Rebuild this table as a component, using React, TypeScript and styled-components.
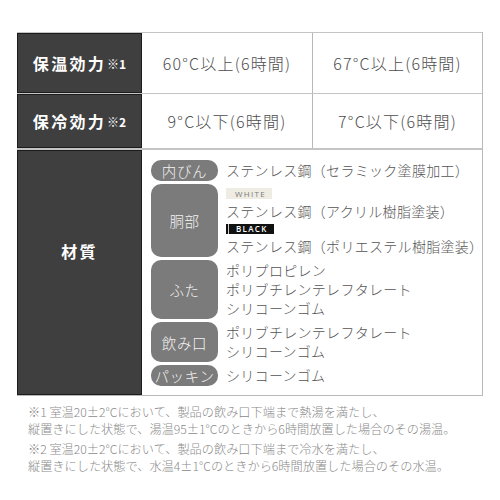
import React from "react";
import styled, { createGlobalStyle } from "styled-components";

const Global = createGlobalStyle`
  html, body { margin: 0; padding: 0; background: #fff; }
  body { font-family: "Noto Sans CJK JP", "Noto Sans", sans-serif; }
`;

const Page = styled.div`
  width: 500px;
  height: 500px;
  padding: 32px 17px 0 17px;
  box-sizing: border-box;
`;

const Table = styled.div`
  width: 466px;
  display: flex;
  flex-direction: column;
  border-right: 1px solid #b8b8b8;
  border-bottom: 1px solid #b8b8b8;
  box-sizing: border-box;
`;

const Row = styled.div<{ $h: number; $double?: boolean }>`
  display: grid;
  grid-template-columns: 125px 1fr 1fr;
  height: ${(p) => p.$h}px;
  border-top: ${(p) => (p.$double ? "2px" : "1px")} solid #c4c4c4;
  box-sizing: content-box;
`;

const MatRow = styled(Row)`
  grid-template-columns: 125px 1fr;
`;

const Head = styled.div<{ $shift?: number }>`
  background: #3f3f3f;
  border: 1px solid #1c1c1c;
  box-sizing: border-box;
  display: flex;
  align-items: center;
  justify-content: center;
  padding-bottom: ${(p) => p.$shift ?? 0}px;
  color: #fff;
  font-weight: 700;
  font-size: 16px;
  letter-spacing: 2.3px;
  white-space: nowrap;
`;

const Sup = styled.span`
  font-size: 12px;
  letter-spacing: 0;
  font-weight: 700;
  vertical-align: 5px;
  margin-left: 1px;
`;

const Value = styled.div<{ $divider?: boolean }>`
  display: flex;
  align-items: center;
  justify-content: center;
  border-left: ${(p) => (p.$divider ? "1px solid #b8b8b8" : "none")};
  color: #4d4d4d;
  font-size: 16px;
  font-weight: 300;
  letter-spacing: 1.2px;
  white-space: nowrap;
`;

const Materials = styled.div`
  display: flex;
  flex-direction: column;
  gap: 3px;
  padding: 10px 0 0 9px;
`;

const Group = styled.div`
  display: flex;
  align-items: stretch;
  gap: 8px;
`;

const Badge = styled.div`
  width: 67px;
  min-height: 21px;
  flex: none;
  background: #7b7b7b;
  border-radius: 10px;
  display: flex;
  align-items: center;
  justify-content: center;
  color: #f2f2f2;
  font-size: 14.5px;
  font-weight: 300;
  letter-spacing: 0.6px;
  white-space: nowrap;
`;

const Lines = styled.div`
  display: flex;
  flex-direction: column;
  justify-content: center;
  padding: 1px 0;
`;

const Line = styled.div`
  font-size: 14px;
  font-weight: 300;
  line-height: 19px;
  letter-spacing: 0.3px;
  color: #555;
  white-space: nowrap;
`;

const ColorTag = styled.div<{ $dark?: boolean }>`
  width: ${(p) => (p.$dark ? 48 : 46)}px;
  height: ${(p) => (p.$dark ? 10 : 11)}px;
  margin: 3px 0;
  padding-left: ${(p) => (p.$dark ? 8 : 9)}px;
  box-sizing: border-box;
  background: ${(p) => (p.$dark ? "#111" : "#efece4")};
  border-left: ${(p) => (p.$dark ? "2px solid #111" : "none")};
  box-shadow: ${(p) => (p.$dark ? "inset 1px 0 0 #cfcfcf" : "none")};
  color: ${(p) => (p.$dark ? "#fff" : "#7a7a7a")};
  font-family: "Open Sans", "Noto Sans", sans-serif;
  font-weight: ${(p) => (p.$dark ? 600 : 400)};
  font-size: 8px;
  line-height: ${(p) => (p.$dark ? 10 : 11)}px;
  letter-spacing: 1.3px;
`;

const Notes = styled.div`
  display: flex;
  flex-direction: column;
  gap: 4px;
  padding: 8px 0 0 11px;
`;

const Note = styled.p`
  margin: 0;
  font-size: 12.2px;
  font-weight: 300;
  line-height: 16.5px;
  color: #8a8a8a;
  white-space: nowrap;
`;

const NoteLine = styled.span`
  display: block;
  height: 16.5px;
`;

type Mat = { label: string; lines: (string | { tag: "WHITE" | "BLACK" })[] };

const mats: Mat[] = [
  { label: "内びん", lines: ["ステンレス鋼（セラミック塗膜加工）"] },
  {
    label: "胴部",
    lines: [
      { tag: "WHITE" },
      "ステンレス鋼（アクリル樹脂塗装）",
      { tag: "BLACK" },
      "ステンレス鋼（ポリエステル樹脂塗装）",
    ],
  },
  { label: "ふた", lines: ["ポリプロピレン", "ポリブチレンテレフタレート", "シリコーンゴム"] },
  { label: "飲み口", lines: ["ポリブチレンテレフタレート", "シリコーンゴム"] },
  { label: "パッキン", lines: ["シリコーンゴム"] },
];

export default function App() {
  return (
    <Page>
      <Global />
      <Table>
        <Row $h={60}>
          <Head>
            保温効力<Sup>※1</Sup>
          </Head>
          <Value>60°C以上(6時間)</Value>
          <Value $divider>67°C以上(6時間)</Value>
        </Row>
        <Row $h={54}>
          <Head>
            保冷効力<Sup>※2</Sup>
          </Head>
          <Value>9°C以下(6時間)</Value>
          <Value $divider>7°C以下(6時間)</Value>
        </Row>
        <MatRow $h={245} $double>
          <Head $shift={44}>材質</Head>
          <Materials>
            {mats.map((m) => (
              <Group key={m.label}>
                <Badge>{m.label}</Badge>
                <Lines>
                  {m.lines.map((l, i) =>
                    typeof l === "string" ? (
                      <Line key={i}>{l}</Line>
                    ) : (
                      <ColorTag key={i} $dark={l.tag === "BLACK"}>
                        {l.tag}
                      </ColorTag>
                    )
                  )}
                </Lines>
              </Group>
            ))}
          </Materials>
        </MatRow>
      </Table>
      <Notes>
        <Note>
          <NoteLine>※1 室温20±2°Cにおいて、製品の飲み口下端まで熱湯を満たし、</NoteLine>
          <NoteLine>縦置きにした状態で、湯温95±1°Cのときから6時間放置した場合のその湯温。</NoteLine>
        </Note>
        <Note>
          <NoteLine>※2 室温20±2°Cにおいて、製品の飲み口下端まで冷水を満たし、</NoteLine>
          <NoteLine>縦置きにした状態で、水温4±1°Cのときから6時間放置した場合のその水温。</NoteLine>
        </Note>
      </Notes>
    </Page>
  );
}
